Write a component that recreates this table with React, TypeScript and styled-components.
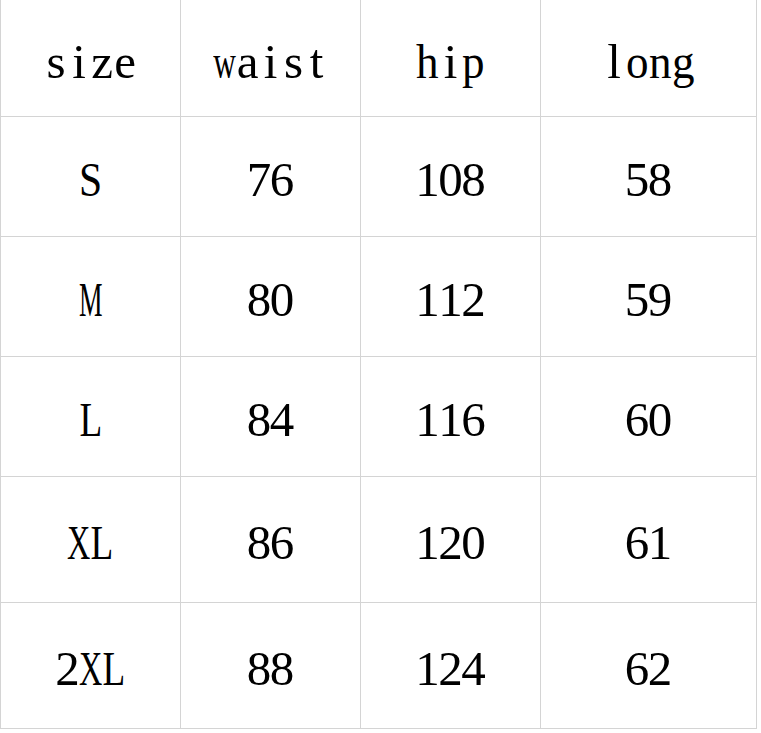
import React from "react";
import styled, { createGlobalStyle } from "styled-components";

const GlobalStyle = createGlobalStyle`
  html, body {
    margin: 0;
    padding: 0;
    background: #ffffff;
  }
`;

const headers = ["size", "waist", "hip", "long"];

const rows = [
  { h: 120, cells: ["S", "76", "108", "58"] },
  { h: 120, cells: ["M", "80", "112", "59"] },
  { h: 120, cells: ["L", "84", "116", "60"] },
  { h: 126, cells: ["XL", "86", "120", "61"] },
  { h: 126, cells: ["2XL", "88", "124", "62"] },
];

// squeeze wide serif letters into half-width cells like the original font
const squeeze: Record<string, number> = {
  w: 0.64,
  M: 0.54,
  X: 0.66,
  L: 0.76,
  S: 0.85,
  h: 0.92,
  p: 0.92,
  o: 0.92,
  n: 0.92,
  g: 0.92,
};

function MonoText({ text }: { text: string }) {
  return (
    <Word>
      {text.split("").map((ch, i) => (
        <CharBox key={i}>
          <Char $sx={squeeze[ch] ?? 1}>{ch}</Char>
        </CharBox>
      ))}
    </Word>
  );
}

export default function App() {
  return (
    <>
      <GlobalStyle />
      <Sheet>
        {headers.map((t, i) => (
          <Cell key={t} $first={i === 0} $h={117}>
            <MonoText text={t} />
          </Cell>
        ))}
        {rows.map((r) =>
          r.cells.map((t, i) => (
            <Cell key={r.cells[0] + i} $first={i === 0} $h={r.h}>
              <MonoText text={t} />
            </Cell>
          ))
        )}
      </Sheet>
    </>
  );
}

const Sheet = styled.div`
  display: grid;
  grid-template-columns: 181px 180px 180px 216px;
  width: 757px;
  background: #ffffff;
`;

const Cell = styled.div<{ $first: boolean; $h: number }>`
  box-sizing: border-box;
  height: ${(p) => p.$h}px;
  border-right: 1px solid #d4d4d4;
  border-bottom: 1px solid #d4d4d4;
  border-left: ${(p) => (p.$first ? "1px solid #d4d4d4" : "none")};
  display: flex;
  align-items: center;
  justify-content: center;
  padding-top: 8px;
`;

const Word = styled.div`
  display: flex;
  font-family: "Liberation Serif", "Times New Roman", serif;
  font-size: 49px;
  line-height: 1.15;
  color: #000000;
`;

const CharBox = styled.span`
  display: inline-flex;
  justify-content: center;
  width: 23px;
`;

const Char = styled.span<{ $sx: number }>`
  display: inline-block;
  transform: scaleX(${(p) => p.$sx});
  transform-origin: center;
`;
